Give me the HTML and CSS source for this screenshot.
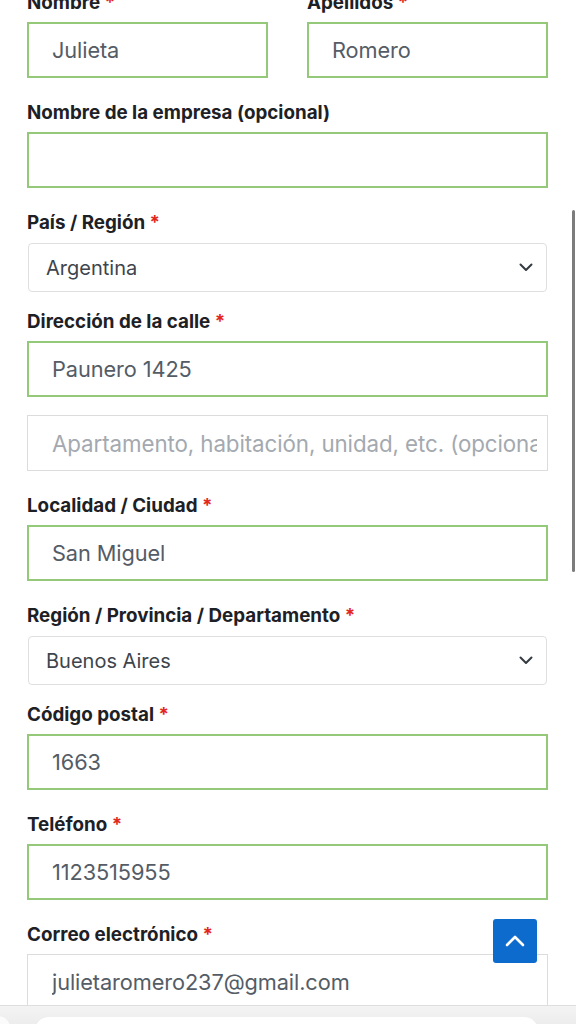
FILE: index.html
```html
<!DOCTYPE html>
<html lang="es">
<head>
<meta charset="utf-8">
<title>Detalles de facturación</title>
<link rel="stylesheet" href="styles.css">
</head>
<body>
<form class="checkout">
  <div class="row two">
    <div class="field">
      <label class="lbl">Nombre <span class="req">*</span></label>
      <input class="inp ok" type="text" value="Julieta">
    </div>
    <div class="field">
      <label class="lbl">Apellidos <span class="req">*</span></label>
      <input class="inp ok" type="text" value="Romero">
    </div>
  </div>
  <div class="field">
    <label class="lbl">Nombre de la empresa (opcional)</label>
    <input class="inp ok" type="text" value="">
  </div>
  <div class="field sel-field">
    <label class="lbl">País / Región <span class="req">*</span></label>
    <div class="sel"><span>Argentina</span>
      <svg class="chev" width="14" height="9" viewBox="0 0 14 9"><path d="M1.5 1.5 L7 7 L12.5 1.5" fill="none" stroke="#333a40" stroke-width="2" stroke-linecap="round" stroke-linejoin="round"/></svg>
    </div>
  </div>
  <div class="field">
    <label class="lbl">Dirección de la calle <span class="req">*</span></label>
    <input class="inp ok" type="text" value="Paunero 1425">
    <div class="inp plain second"><span class="ph">Apartamento, habitación, unidad, etc. (opcional)</span></div>
  </div>
  <div class="field">
    <label class="lbl">Localidad / Ciudad <span class="req">*</span></label>
    <input class="inp ok" type="text" value="San Miguel">
  </div>
  <div class="field sel-field">
    <label class="lbl">Región / Provincia / Departamento <span class="req">*</span></label>
    <div class="sel"><span>Buenos Aires</span>
      <svg class="chev" width="14" height="9" viewBox="0 0 14 9"><path d="M1.5 1.5 L7 7 L12.5 1.5" fill="none" stroke="#333a40" stroke-width="2" stroke-linecap="round" stroke-linejoin="round"/></svg>
    </div>
  </div>
  <div class="field">
    <label class="lbl">Código postal <span class="req">*</span></label>
    <input class="inp ok" type="text" value="1663">
  </div>
  <div class="field">
    <label class="lbl">Teléfono <span class="req">*</span></label>
    <input class="inp ok" type="text" value="1123515955">
  </div>
  <div class="field">
    <label class="lbl">Correo electrónico <span class="req">*</span></label>
    <input class="inp plain" type="text" value="julietaromero237@gmail.com">
  </div>
</form>

<a class="to-top" href="#" aria-label="Volver arriba">
  <svg width="20" height="12" viewBox="0 0 20 12"><path d="M2 10 L10 2 L18 10" fill="none" stroke="#ffffff" stroke-width="2.6" stroke-linecap="round" stroke-linejoin="round"/></svg>
</a>
<div class="scrollbar"></div>
<div class="browser-bar">
  <div class="pill-left"></div>
  <div class="pill"></div>
</div>
</body>
</html>
```

FILE: styles.css
```css
* { box-sizing: border-box; }
html, body { margin: 0; padding: 0; background: #ffffff; }
body {
  font-family: Inter, "Noto Sans", "Liberation Sans", sans-serif;
  color: #1f2328;
  overflow: hidden;
  height: 1024px;
}
.checkout {
  margin-top: -9px;
  padding: 0 28px 0 27px;
}
.row.two {
  display: grid;
  grid-template-columns: 1fr 1fr;
  column-gap: 39px;
}
.field {
  display: flex;
  flex-direction: column;
  margin-bottom: 23px;
}
.field.sel-field { margin-bottom: 18px; }
.lbl {
  display: block;
  font-size: 18.8px;
  font-weight: 700;
  line-height: 24px;
  height: 24px;
  margin-bottom: 7px;
  color: #1d2125;
  white-space: nowrap;
}
.sel-field .lbl { margin-bottom: 8px; }
.req { color: #e2261c; font-weight: 700; }
.inp {
  display: block;
  width: 100%;
  height: 56px;
  padding: 0 10px 0 23px;
  font-family: Inter, "Noto Sans", "Liberation Sans", sans-serif;
  font-size: 21.75px;
  color: #545c66;
  background: #ffffff;
  border: 2px solid #93c978;
  border-radius: 0;
  outline: none;
  letter-spacing: -0.1px;
}
.inp.plain {
  border: 1px solid #dcdcdc;
  padding-left: 24px;
}
div.inp {
  display: flex;
  align-items: center;
  overflow: hidden;
  white-space: nowrap;
}
.ph {
  display: block;
  flex: 1 1 auto;
  min-width: 0;
  overflow: hidden;
  font-size: 22.35px;
  color: #a4a9b0;
}
.inp.second { margin-top: 18px; }
.sel {
  display: flex;
  align-items: center;
  justify-content: space-between;
  height: 49px;
  margin: 0 1px;
  padding: 0 13px 0 17px;
  border: 1px solid #dfdfdf;
  border-radius: 4px;
  font-size: 20px;
  color: #3e454c;
  background: #ffffff;
}
.chev { display: block; }
.to-top {
  position: fixed;
  right: 39px;
  bottom: 61px;
  width: 44px;
  height: 44px;
  border-radius: 3px;
  background: #0d6bcd;
  display: flex;
  align-items: center;
  justify-content: center;
}
.scrollbar {
  position: fixed;
  right: 1px;
  top: 210px;
  width: 3px;
  height: 362px;
  border-radius: 2px;
  background: #7c7c7c;
}
.browser-bar {
  position: fixed;
  left: 0;
  right: 0;
  bottom: 0;
  height: 19px;
  background: linear-gradient(#f3f3f3, #ededed);
  border-top: 1px solid #dedede;
}
.pill-left {
  position: absolute;
  left: -20px;
  top: 10px;
  width: 30px;
  height: 30px;
  border-radius: 12px;
  background: #fbfbfb;
}
.pill {
  position: absolute;
  left: 35px;
  right: 38px;
  top: 11px;
  height: 30px;
  border-radius: 14px;
  background: #ffffff;
}
```
